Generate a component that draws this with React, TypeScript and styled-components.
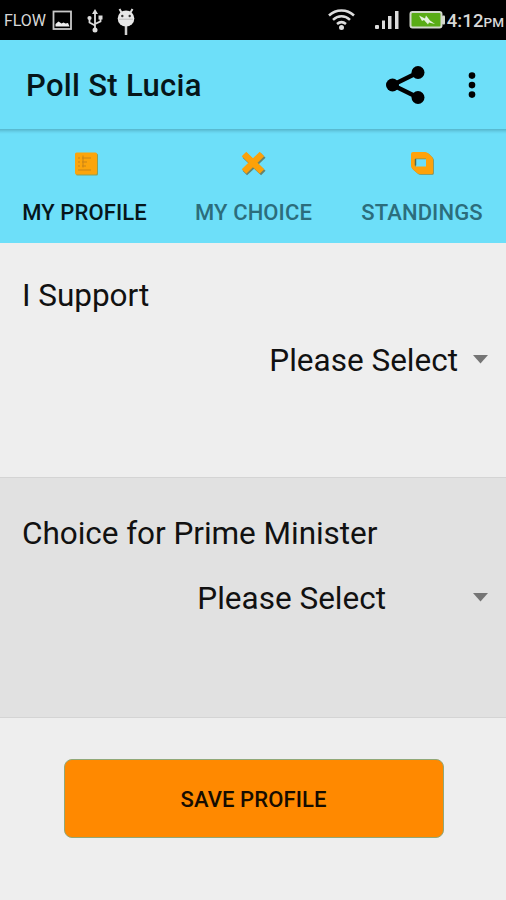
import React from "react";
import styled, { createGlobalStyle } from "styled-components";

const GlobalStyle = createGlobalStyle`
  * { box-sizing: border-box; }
  body { margin: 0; background: #eeeeee; font-family: Roboto, "Liberation Sans", sans-serif; }
  button { font-family: inherit; }
`;

const Screen = styled.div`
  width: 506px;
  height: 900px;
  display: flex;
  flex-direction: column;
  background: #eeeeee;
  color: #111;
  overflow: hidden;
`;

const StatusBar = styled.header`
  height: 40px;
  flex: none;
  display: flex;
  align-items: center;
  justify-content: space-between;
  padding: 0 2px 0 4px;
  background: #000;
  color: #d8d8d8;
`;

const StatusGroup = styled.div`
  display: flex;
  align-items: center;
  height: 40px;
`;

const Carrier = styled.span`
  width: 48px;
  padding-top: 2px;
  font-size: 16px;
  line-height: 40px;
  letter-spacing: -0.1px;
`;

const Clock = styled.span`
  font-size: 18.5px;
  line-height: 40px;
  padding-top: 3px;
  white-space: nowrap;
  font-weight: 500;
  letter-spacing: 0.1px;
`;

const Meridiem = styled.span`
  font-size: 13.5px;
  letter-spacing: 0;
`;

const AppBar = styled.div`
  height: 89px;
  flex: none;
  display: flex;
  align-items: center;
  justify-content: space-between;
  padding: 0 30px 0 26px;
  background: #6ddff9;
`;

const Title = styled.h1`
  margin: 0;
  padding-top: 2px;
  font-size: 31px;
  line-height: 36px;
  font-weight: 500;
  letter-spacing: 0.3px;
  color: #06161a;
`;

const Actions = styled.div`
  display: flex;
  align-items: center;
  gap: 43px;
`;

const IconButton = styled.button`
  display: flex;
  padding: 0;
  border: 0;
  background: none;
`;

const TabBar = styled.nav`
  height: 114px;
  flex: none;
  display: grid;
  grid-template-columns: 169px 169px 168px;
  background: linear-gradient(#57b5cb 0, #5bbfd6 1px, #67d3ed 3px, #6ddff9 5px);
`;

const Tab = styled.button<{ $active?: boolean }>`
  display: flex;
  flex-direction: column;
  align-items: center;
  gap: 22px;
  padding: 21px 0 0;
  border: 0;
  background: none;
  font-size: 22px;
  line-height: 26px;
  font-weight: 500;
  letter-spacing: 0.1px;
  white-space: nowrap;
  color: ${(p) => (p.$active ? "#06161a" : "#2c6d7c")};
`;

const Section = styled.section<{ $shaded?: boolean }>`
  height: ${(p) => (p.$shaded ? 241 : 234)}px;
  flex: none;
  display: flex;
  flex-direction: column;
  gap: 29px;
  padding: ${(p) => (p.$shaded ? 38 : 35)}px 18px 0 22px;
  background: ${(p) => (p.$shaded ? "#e1e1e1" : "#eeeeee")};
  border: solid #d4d4d4;
  border-width: ${(p) => (p.$shaded ? "1px 0" : "0")};
`;

const Label = styled.label`
  font-size: 31.5px;
  line-height: 36px;
  letter-spacing: -0.04px;
  white-space: nowrap;
`;

const Spinner = styled.div<{ $gap: number }>`
  display: flex;
  align-items: center;
  justify-content: flex-end;
  gap: ${(p) => p.$gap}px;
  font-size: 31.5px;
  line-height: 36px;

  svg {
    margin-bottom: 3px;
  }
`;

const Footer = styled.footer`
  display: flex;
  justify-content: center;
  padding: 41px 0 0;
  margin-left: 1px;
`;

const SaveButton = styled.button`
  width: 380px;
  height: 79px;
  border: 1px solid #91a878;
  border-radius: 8px;
  background: #ff8900;
  color: #160c00;
  font-size: 22px;
  font-weight: 500;
  line-height: 26px;
  letter-spacing: 0.1px;
  padding: 3px 0 0;
`;

const LeftIcons = () => (
  <svg width="84" height="30" viewBox="0 0 84 30">
    <g transform="translate(0 5)">
      <rect x="1.500" y="1.500" width="17.5" height="17.500" fill="none" stroke="#c9c9c9" strokeWidth="1.8" />
      <path d="M3.500 16.500v-2.500l3-2.500 3 2 2-1 2 1 2.500-.5 1.500 3.500z" fill="#efefef" />
    </g>
    <g stroke="#dcdcdc" fill="none" strokeWidth="1.8">
      <path d="M43 7v18M43 20.5l-5.500-3V13M43 19l5.500-2.600V12.500" />
      <path d="M40 9l3-5 3 5z" fill="#dcdcdc" stroke="none" />
      <circle cx="43" cy="25" r="2.5" fill="#dcdcdc" stroke="none" />
      <circle cx="37.500" cy="13" r="2.100" fill="#dcdcdc" stroke="none" />
      <rect x="46.500" y="10.500" width="4" height="4" fill="#dcdcdc" stroke="none" />
    </g>
    <g transform="translate(74 13.500)">
      <path d="M-4.500-6L-6.500-9.500M4.500-6L6.500-9.500" stroke="#e0e0e0" strokeWidth="2" />
      <path d="M0 6v12" stroke="#d0d0d0" strokeWidth="2.500" />
      <ellipse cx="0" cy="0" rx="8.300" ry="8" fill="#e8e8e8" />
      <circle cx="-3.700" cy="-2.500" r="1.200" fill="#333" />
      <circle cx="3.700" cy="-2.500" r="1.200" fill="#333" />
      <path d="M-7 .7H7" stroke="#bbb" strokeWidth="1" />
    </g>
  </svg>
);

const RightIcons = () => (
  <svg width="119" height="30" viewBox="0 0 119 30">
    <g fill="none" stroke="#dcdcdc" strokeWidth="2.500">
      <path d="M1 10.500C8 3.800 19 3.800 26 10.500" />
      <path d="M5 14.800C10 10 17 10 22 14.800" />
      <path d="M9 19C12 16.500 15 16.500 18 19" />
      <circle cx="13.500" cy="22.500" r="2.500" fill="#dcdcdc" stroke="none" />
    </g>
    <g fill="#dcdcdc">
      <rect x="47" y="20" width="4" height="4" rx="1" />
      <rect x="54" y="15.500" width="3" height="8.500" />
      <rect x="60" y="11" width="3.500" height="13" />
      <rect x="67" y="6" width="3.500" height="18" />
    </g>
    <rect x="82.500" y="7" width="31" height="15.500" rx="2" fill="#59ac16" stroke="#d2d8cc" strokeWidth="2" />
    <rect x="114" y="10.500" width="3" height="9" rx="1" fill="#d2d8cc" />
    <path d="M91 10.500l6 3 1-3 4 5 5 3.500-6-1.500-1 2-4-4.500-2 1z" fill="#e4f2dc" />
  </svg>
);

const ShareIcon = () => (
  <svg width="40" height="40" viewBox="0 0 40 40">
    <path d="M33 7.500L7.500 20L33 32.500" fill="none" stroke="#000" strokeWidth="4.400" />
    <circle cx="7.500" cy="20" r="6.500" />
    <circle cx="33" cy="7.500" r="6.500" />
    <circle cx="33" cy="32.500" r="6.500" />
  </svg>
);

const MoreIcon = () => (
  <svg width="8" height="30" viewBox="0 0 8 30">
    <circle cx="4" cy="5.600" r="3.300" />
    <circle cx="4" cy="15.100" r="3.300" />
    <circle cx="4" cy="24.600" r="3.300" />
  </svg>
);

const ProfileIcon = () => (
  <svg width="28" height="28" viewBox="0 0 28 28">
    <rect x="5" y="3.600" width="22" height="22" rx="1.500" fill="#8ba05b" />
    <rect x="4" y="2.500" width="22" height="22" rx="1.500" fill="#fca50c" />
    <path d="M7 8h2M7 12h2M7 16h2M11 8h9M11 12h5M11 16h4M12 5.500v12M7 20h13" stroke="#c98417" strokeWidth="1" fill="none" />
  </svg>
);

const CrossIcon = () => (
  <svg width="28" height="28" viewBox="0 0 28 28" fill="none" strokeLinejoin="round">
    <path d="M4 4.500L22.500 22M22.500 4.500L4 22" stroke="#66836d" strokeWidth="6.500" transform="translate(.8 1)" />
    <path d="M4 4L22 21.500M22 4L4 21.500" stroke="#fca109" strokeWidth="6.500" />
  </svg>
);

const StandingsIcon = () => (
  <svg width="28" height="28" viewBox="0 0 28 28">
    <path
      d="M5 2H17Q19 2 20.500 3.500L24 7Q25 8 25 9.500V22.500Q25 24 23.500 24H12Q10 24 8.500 22.500L4.500 19Q3 17.500 3 16V4Q3 2 5 2ZM7 8.500V16.500H18V8.500Z"
      fill="#8c8b48"
      fillRule="evenodd"
      transform="translate(.8 .8)"
    />
    <path
      d="M5 2H17Q19 2 20.500 3.500L24 7Q25 8 25 9.500V22.500Q25 24 23.500 24H12Q10 24 8.500 22.500L4.500 19Q3 17.500 3 16V4Q3 2 5 2ZM7 8.500V16.500H18V8.500Z"
      fill="#ffa20a"
      fillRule="evenodd"
    />
    <path d="M7.500 9V15.500" stroke="#536d4f" strokeWidth="1.500" />
  </svg>
);

const Caret = () => (
  <svg width="15" height="9" viewBox="0 0 15 9">
    <path d="M0 0H15L7.500 8.500Z" fill="#757575" />
  </svg>
);

export default function App() {
  return (
    <Screen>
      <GlobalStyle />
      <StatusBar>
        <StatusGroup>
          <Carrier>FLOW</Carrier>
          <LeftIcons />
        </StatusGroup>
        <StatusGroup>
          <RightIcons />
          <Clock>
            4:12<Meridiem>PM</Meridiem>
          </Clock>
        </StatusGroup>
      </StatusBar>
      <AppBar>
        <Title>Poll St Lucia</Title>
        <Actions>
          <IconButton aria-label="Share"><ShareIcon /></IconButton>
          <IconButton aria-label="More options"><MoreIcon /></IconButton>
        </Actions>
      </AppBar>
      <TabBar>
        <Tab $active><ProfileIcon />MY PROFILE</Tab>
        <Tab><CrossIcon />MY CHOICE</Tab>
        <Tab><StandingsIcon />STANDINGS</Tab>
      </TabBar>
      <Section>
        <Label>I Support</Label>
        <Spinner $gap={15}>Please Select<Caret /></Spinner>
      </Section>
      <Section $shaded>
        <Label>Choice for Prime Minister</Label>
        <Spinner $gap={87}>Please Select<Caret /></Spinner>
      </Section>
      <Footer>
        <SaveButton>SAVE PROFILE</SaveButton>
      </Footer>
    </Screen>
  );
}
